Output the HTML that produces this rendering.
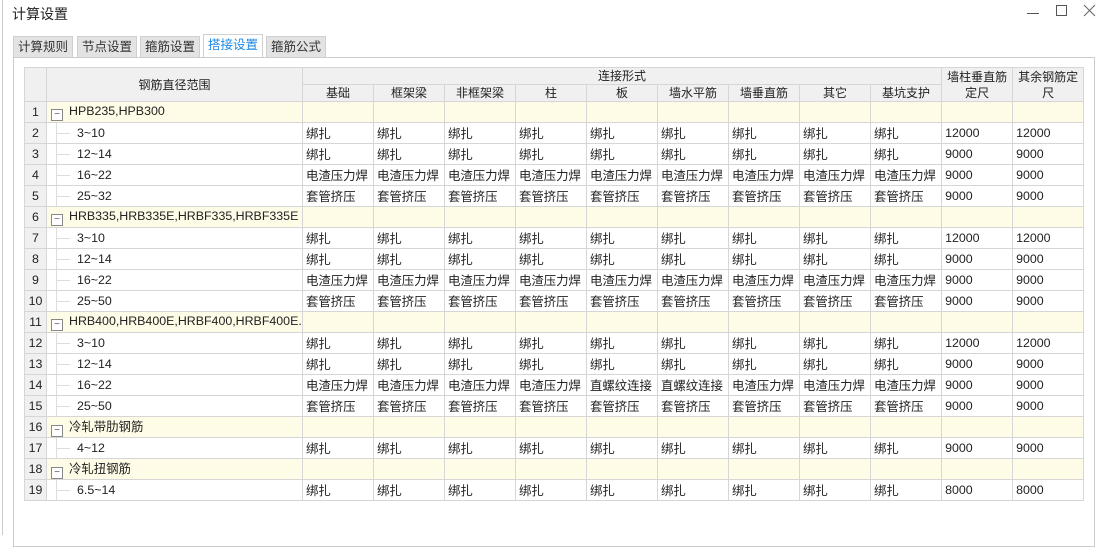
<!DOCTYPE html>
<html><head><meta charset="utf-8"><style>
*{margin:0;padding:0;box-sizing:border-box}
body{width:1104px;height:535px;background:#fff;font-family:"Liberation Sans","Noto Sans CJK SC",sans-serif;font-size:12px;color:#222;position:relative;overflow:hidden}
.title{position:absolute;left:12px;top:4px;font-size:14px;color:#222}
.wl{position:absolute;left:2px;top:0;width:1px;height:535px;background:#ccc}
.tabs{position:absolute;left:13px;top:35px;height:23px}
.tab{position:absolute;top:1px;height:22px;background:#e3e3e3;border:1px solid #d0d0d0;border-bottom:none;color:#333;font-size:12.5px;text-align:center;line-height:20px}
.tab.a{top:-1px;height:24px;background:#fff;color:#1e88e5}
.panel{position:absolute;left:13px;top:57px;width:1082px;height:490px;border:1px solid #ccc;background:#fff}
table{position:absolute;left:24px;top:67px;border-collapse:collapse;table-layout:fixed;width:1060px}
td{border:1px solid #d6d6d6;height:21px;padding:0 0 0 3px;white-space:nowrap;overflow:hidden;font-size:12.4px}
thead td{background:#f0f0f0;text-align:center;padding:0;height:17px;line-height:16px;font-size:12px}
td.n{background:#f0f0f0;text-align:center;padding:0}
tr.g td{background:#fefbe7}
tr.g td.n{background:#f0f0f0}
.box{display:inline-block;width:12px;height:12px;border:1px solid #888;vertical-align:-2px;margin-right:6px;margin-left:1px;font-size:10px;line-height:9px;text-align:center;color:#555;background:#fff}
.t{position:relative;padding-left:30px!important}
.t:before{content:"";position:absolute;left:9px;top:-1px;height:22px;border-left:1px solid #ddd}
.t:after{content:"";position:absolute;left:9px;top:10px;width:14px;border-top:1px solid #ddd}
</style></head><body>
<div class="wl"></div>
<div class="title">计算设置</div>
<svg style="position:absolute;left:1020px;top:0" width="84" height="24">
<path d="M7 13.5H19" stroke="#555" fill="none"/>
<rect x="36.5" y="5.5" width="10" height="10" stroke="#555" fill="none"/>
<path d="M64 5L75 16M75 5L64 16" stroke="#666" fill="none"/>
</svg>
<div class="tabs">
<div class="tab" style="left:0;width:60px">计算规则</div>
<div class="tab" style="left:64px;width:60px">节点设置</div>
<div class="tab" style="left:127px;width:60px">箍筋设置</div>
<div class="tab a" style="left:190px;width:60px">搭接设置</div>
<div class="tab" style="left:253px;width:60px">箍筋公式</div>
</div>
<div class="panel"></div>
<table>
<colgroup><col style="width:22px"><col style="width:256px"><col span="11" style="width:71px"></colgroup>
<thead>
<tr><td rowspan="2"></td><td rowspan="2">钢筋直径范围</td><td colspan="9">连接形式</td><td rowspan="2">墙柱垂直筋<br>定尺</td><td rowspan="2">其余钢筋定<br>尺</td></tr>
<tr><td>基础</td><td>框架梁</td><td>非框架梁</td><td>柱</td><td>板</td><td>墙水平筋</td><td>墙垂直筋</td><td>其它</td><td>基坑支护</td></tr>
</thead>
<tbody>
<tr class="g"><td class="n">1</td><td><span class="box">−</span>HPB235,HPB300</td><td></td><td></td><td></td><td></td><td></td><td></td><td></td><td></td><td></td><td></td><td></td></tr>
<tr><td class="n">2</td><td class="t">3~10</td><td>绑扎</td><td>绑扎</td><td>绑扎</td><td>绑扎</td><td>绑扎</td><td>绑扎</td><td>绑扎</td><td>绑扎</td><td>绑扎</td><td>12000</td><td>12000</td></tr>
<tr><td class="n">3</td><td class="t">12~14</td><td>绑扎</td><td>绑扎</td><td>绑扎</td><td>绑扎</td><td>绑扎</td><td>绑扎</td><td>绑扎</td><td>绑扎</td><td>绑扎</td><td>9000</td><td>9000</td></tr>
<tr><td class="n">4</td><td class="t">16~22</td><td>电渣压力焊</td><td>电渣压力焊</td><td>电渣压力焊</td><td>电渣压力焊</td><td>电渣压力焊</td><td>电渣压力焊</td><td>电渣压力焊</td><td>电渣压力焊</td><td>电渣压力焊</td><td>9000</td><td>9000</td></tr>
<tr><td class="n">5</td><td class="t">25~32</td><td>套管挤压</td><td>套管挤压</td><td>套管挤压</td><td>套管挤压</td><td>套管挤压</td><td>套管挤压</td><td>套管挤压</td><td>套管挤压</td><td>套管挤压</td><td>9000</td><td>9000</td></tr>
<tr class="g"><td class="n">6</td><td><span class="box">−</span>HRB335,HRB335E,HRBF335,HRBF335E</td><td></td><td></td><td></td><td></td><td></td><td></td><td></td><td></td><td></td><td></td><td></td></tr>
<tr><td class="n">7</td><td class="t">3~10</td><td>绑扎</td><td>绑扎</td><td>绑扎</td><td>绑扎</td><td>绑扎</td><td>绑扎</td><td>绑扎</td><td>绑扎</td><td>绑扎</td><td>12000</td><td>12000</td></tr>
<tr><td class="n">8</td><td class="t">12~14</td><td>绑扎</td><td>绑扎</td><td>绑扎</td><td>绑扎</td><td>绑扎</td><td>绑扎</td><td>绑扎</td><td>绑扎</td><td>绑扎</td><td>9000</td><td>9000</td></tr>
<tr><td class="n">9</td><td class="t">16~22</td><td>电渣压力焊</td><td>电渣压力焊</td><td>电渣压力焊</td><td>电渣压力焊</td><td>电渣压力焊</td><td>电渣压力焊</td><td>电渣压力焊</td><td>电渣压力焊</td><td>电渣压力焊</td><td>9000</td><td>9000</td></tr>
<tr><td class="n">10</td><td class="t">25~50</td><td>套管挤压</td><td>套管挤压</td><td>套管挤压</td><td>套管挤压</td><td>套管挤压</td><td>套管挤压</td><td>套管挤压</td><td>套管挤压</td><td>套管挤压</td><td>9000</td><td>9000</td></tr>
<tr class="g"><td class="n">11</td><td><span class="box">−</span>HRB400,HRB400E,HRBF400,HRBF400E...</td><td></td><td></td><td></td><td></td><td></td><td></td><td></td><td></td><td></td><td></td><td></td></tr>
<tr><td class="n">12</td><td class="t">3~10</td><td>绑扎</td><td>绑扎</td><td>绑扎</td><td>绑扎</td><td>绑扎</td><td>绑扎</td><td>绑扎</td><td>绑扎</td><td>绑扎</td><td>12000</td><td>12000</td></tr>
<tr><td class="n">13</td><td class="t">12~14</td><td>绑扎</td><td>绑扎</td><td>绑扎</td><td>绑扎</td><td>绑扎</td><td>绑扎</td><td>绑扎</td><td>绑扎</td><td>绑扎</td><td>9000</td><td>9000</td></tr>
<tr><td class="n">14</td><td class="t">16~22</td><td>电渣压力焊</td><td>电渣压力焊</td><td>电渣压力焊</td><td>电渣压力焊</td><td>直螺纹连接</td><td>直螺纹连接</td><td>电渣压力焊</td><td>电渣压力焊</td><td>电渣压力焊</td><td>9000</td><td>9000</td></tr>
<tr><td class="n">15</td><td class="t">25~50</td><td>套管挤压</td><td>套管挤压</td><td>套管挤压</td><td>套管挤压</td><td>套管挤压</td><td>套管挤压</td><td>套管挤压</td><td>套管挤压</td><td>套管挤压</td><td>9000</td><td>9000</td></tr>
<tr class="g"><td class="n">16</td><td><span class="box">−</span>冷轧带肋钢筋</td><td></td><td></td><td></td><td></td><td></td><td></td><td></td><td></td><td></td><td></td><td></td></tr>
<tr><td class="n">17</td><td class="t">4~12</td><td>绑扎</td><td>绑扎</td><td>绑扎</td><td>绑扎</td><td>绑扎</td><td>绑扎</td><td>绑扎</td><td>绑扎</td><td>绑扎</td><td>9000</td><td>9000</td></tr>
<tr class="g"><td class="n">18</td><td><span class="box">−</span>冷轧扭钢筋</td><td></td><td></td><td></td><td></td><td></td><td></td><td></td><td></td><td></td><td></td><td></td></tr>
<tr><td class="n">19</td><td class="t">6.5~14</td><td>绑扎</td><td>绑扎</td><td>绑扎</td><td>绑扎</td><td>绑扎</td><td>绑扎</td><td>绑扎</td><td>绑扎</td><td>绑扎</td><td>8000</td><td>8000</td></tr>
</tbody>
</table>
</body></html>
